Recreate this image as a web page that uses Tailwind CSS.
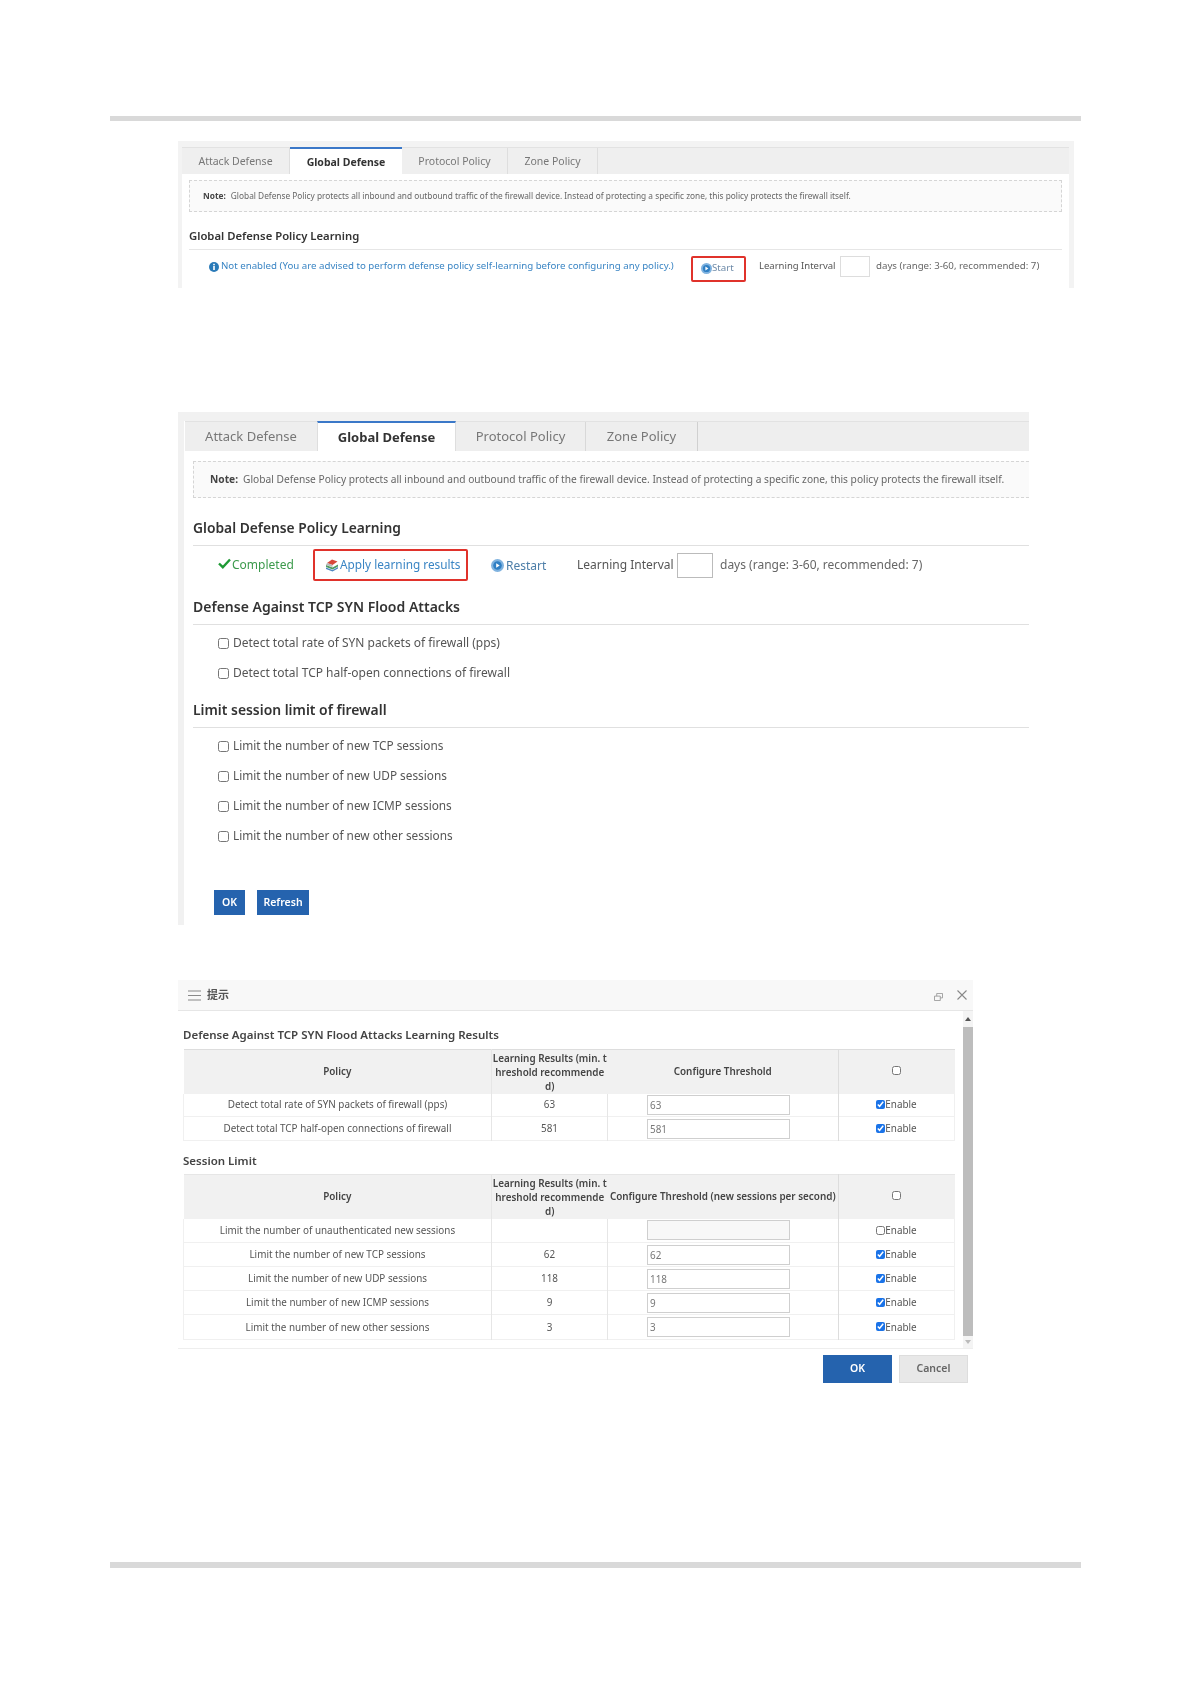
<!DOCTYPE html>
<html>
<head>
<meta charset="UTF-8">
<script src="https://cdn.jsdelivr.net/npm/@tailwindcss/browser@4"></script>
</head>
<body class="bg-white text-[#444] font-['Noto_Sans','Noto_Sans_CJK_SC',sans-serif]">
<div class="w-[1191px] h-[1684px] overflow-hidden pt-[116px] blur-[0.3px]">
  <div class="mx-[110px] h-[5px] bg-[#d9d9d9]"></div>

  <!-- first capture: learning not started -->
  <section class="mt-[20px] ml-[178px] w-[896px] h-[147px] bg-[#f3f3f3] pt-[6px] pl-[4px] pr-[5px]">
    <div class="bg-white h-full">
      <div class="flex h-[27px] bg-[#efefef] text-[10.5px] text-[#777] border-t border-[#e2e2e2]">
        <div class="w-[108px] flex items-center justify-center border-r border-[#dedede] pt-[1px]">Attack Defense</div>
        <div class="w-[112px] flex items-center justify-center bg-white border-t-[2px] border-[#3b78c8] -mt-px font-bold text-[#333] pt-[3px]">Global Defense</div>
        <div class="w-[106px] flex items-center justify-center border-r border-[#dedede] pt-[1px]">Protocol Policy</div>
        <div class="w-[90px] flex items-center justify-center border-r border-[#dedede] pt-[1px]">Zone Policy</div>
      </div>
      <div class="mx-[7px] mt-[6px] h-[32px] flex items-center pl-[13px] pt-[1px] bg-[#fafafa] border border-dashed border-[#d5d5d5] text-[8.3px] text-[#666] whitespace-nowrap">
        <b class="text-[#444] mr-[5px]">Note:</b>Global Defense Policy protects all inbound and outbound traffic of the firewall device. Instead of protecting a specific zone, this policy protects the firewall itself.
      </div>
      <h3 class="mx-[7px] mt-[13px] h-[24px] text-[11.3px] font-semibold text-[#333] leading-[22px] border-none">Global Defense Policy Learning</h3>
      <div class="mx-[7px] border-t border-[#e6e6e6]"></div>
      <div class="flex items-center h-[21px] mt-[6px] text-[9.7px] whitespace-nowrap">
        <svg class="ml-[27px] w-[10px] h-[10px]" viewBox="0 0 10 10"><circle cx="5" cy="5" r="5" fill="#2a7ab8"/><rect x="4.2" y="4" width="1.6" height="4" fill="#fff"/><rect x="4.2" y="1.8" width="1.6" height="1.5" fill="#fff"/></svg>
        <span class="ml-[2px] w-[465px] text-[#3a85c4]">Not enabled (You are advised to perform defense policy self-learning before configuring any policy.)</span>
        <div class="ml-[5px] w-[55px] h-[26px] self-start flex items-center pl-[8px] pb-[1px] border-[2px] border-[#e0322b] rounded-[2px] text-[#6d8aa8]">
          <svg class="w-[11px] h-[11px]" viewBox="0 0 14 14"><circle cx="7" cy="7" r="7" fill="#7fb2df"/><circle cx="7" cy="7" r="4.6" fill="#2f7fc4"/><path d="M5.6 4.6 9.4 7 5.6 9.4Z" fill="#fff"/></svg>
          <span>Start</span>
        </div>
        <span class="ml-[13px] w-[76px] text-[9.5px] text-[#555]">Learning Interval</span>
        <div class="ml-[5px] w-[30px] h-[21px] border border-[#ddd]"></div>
        <span class="ml-[6px] text-[#666]">days (range: 3-60, recommended: 7)</span>
      </div>
    </div>
  </section>

  <!-- second capture: learning completed -->
  <section class="mt-[124px] ml-[178px] w-[851px] h-[513px] bg-[#f1f1f1] pt-[9px] pl-[6px]">
    <div class="bg-white h-full pl-px">
      <div class="flex h-[30px] bg-[#eeeeee] text-[13px] text-[#777] border-t border-[#e2e2e2]">
        <div class="w-[132px] flex items-center justify-center">Attack Defense</div>
        <div class="w-[139px] flex items-center justify-center bg-white border-t-[2px] border-x border-x-[#dedede] border-t-[#3b78c8] -mt-px font-bold text-[#333] pt-[1px]">Global Defense</div>
        <div class="w-[130px] flex items-center justify-center border-r border-[#d8d8d8]">Protocol Policy</div>
        <div class="w-[112px] flex items-center justify-center border-r border-[#d0d0d0]">Zone Policy</div>
      </div>
      <div class="ml-[8px] mt-[10px] h-[37px] flex items-center pl-[16px] bg-[#fafafa] border border-r-0 border-dashed border-[#d5d5d5] text-[10.2px] text-[#666] whitespace-nowrap">
        <b class="text-[#444] mr-[5px]">Note:</b>Global Defense Policy protects all inbound and outbound traffic of the firewall device. Instead of protecting a specific zone, this policy protects the firewall itself.
      </div>
      <h3 class="ml-[8px] mt-[19px] h-[28px] text-[13.8px] font-semibold text-[#333] leading-[22px]">Global Defense Policy Learning</h3>
      <div class="ml-[8px] border-t border-[#e0e0e0]"></div>
      <div class="flex items-center h-[32px] mt-[3px] text-[12px] whitespace-nowrap">
        <svg class="ml-[33px] w-[13px] h-[11px] -mt-[3px]" viewBox="0 0 13 11"><path d="M1 5.5 4.8 9.2 12 1.5" fill="none" stroke="#1f9a35" stroke-width="2.4"/></svg>
        <span class="ml-[1px] w-[62px] text-[#3c9a4c]">Completed</span>
        <div class="ml-[19px] w-[155px] h-[32px] flex items-center pl-[10px] border-[2px] border-[#e0322b] rounded-[2px] text-[11.8px] text-[#3a85c4]">
          <svg class="w-[14px] h-[14px] shrink-0" viewBox="0 0 14 14"><path d="M2 5 7 1.5 12.5 3.5 7.5 7Z" fill="#d8483a"/><path d="M1 7 7.5 9.5 13 6.5V8.5L7.5 11.5 1 9Z" fill="#4f9c62"/><path d="M1 9.5 7.5 12 13 9V10.5L7.5 13.5 1 11Z" fill="#4f86c0"/><path d="M2 5 7.5 7V9L1 7Z" fill="#b8b8b8"/></svg>
          <span class="ml-[1px]">Apply learning results</span>
        </div>
        <svg class="ml-[23px] w-[13px] h-[13px] shrink-0" viewBox="0 0 14 14"><circle cx="7" cy="7" r="7" fill="#7fb2df"/><circle cx="7" cy="7" r="4.6" fill="#2f7fc4"/><path d="M5.6 4.6 9.4 7 5.6 9.4Z" fill="#fff"/></svg>
        <span class="ml-[2px] w-[40px] text-[#4d7ea8] mt-[2px]">Restart</span>
        <span class="ml-[31px] w-[95px] text-[#555]">Learning Interval</span>
        <div class="ml-[5px] w-[36px] h-[25px] border border-[#bbb]"></div>
        <span class="ml-[7px] text-[#666]">days (range: 3-60, recommended: 7)</span>
      </div>
      <h3 class="ml-[8px] mt-[15px] h-[28px] text-[14px] font-semibold text-[#333] leading-[22px]">Defense Against TCP SYN Flood Attacks</h3>
      <div class="ml-[8px] border-t border-[#e0e0e0]"></div>
      <div class="pl-[33px] pt-[3px] text-[12px] text-[#555]">
        <label class="flex items-center h-[30px] gap-[4px]"><input type="checkbox" class="m-0 w-[11px] h-[11px]">Detect total rate of SYN packets of firewall (pps)</label>
        <label class="flex items-center h-[30px] gap-[4px]"><input type="checkbox" class="m-0 w-[11px] h-[11px]">Detect total TCP half-open connections of firewall</label>
      </div>
      <h3 class="ml-[8px] mt-[11px] h-[28px] text-[13.9px] font-semibold text-[#333] leading-[22px]">Limit session limit of firewall</h3>
      <div class="ml-[8px] border-t border-[#e0e0e0]"></div>
      <div class="pl-[33px] pt-[3px] text-[11.8px] text-[#555]">
        <label class="flex items-center h-[30px] gap-[4px]"><input type="checkbox" class="m-0 w-[11px] h-[11px]">Limit the number of new TCP sessions</label>
        <label class="flex items-center h-[30px] gap-[4px]"><input type="checkbox" class="m-0 w-[11px] h-[11px]">Limit the number of new UDP sessions</label>
        <label class="flex items-center h-[30px] gap-[4px]"><input type="checkbox" class="m-0 w-[11px] h-[11px]">Limit the number of new ICMP sessions</label>
        <label class="flex items-center h-[30px] gap-[4px]"><input type="checkbox" class="m-0 w-[11px] h-[11px]">Limit the number of new other sessions</label>
      </div>
      <div class="flex gap-[12px] ml-[29px] mt-[39px] text-[10.5px] font-semibold text-white">
        <div class="w-[31px] h-[25px] bg-[#2563ae] flex items-center justify-center">OK</div>
        <div class="w-[52px] h-[25px] bg-[#2563ae] flex items-center justify-center">Refresh</div>
      </div>
    </div>
  </section>

  <!-- third capture: results dialog -->
  <section class="mt-[55px] ml-[178px] w-[795px]">
    <div class="flex items-center h-[31px] bg-[#f8f8f8] border-b border-[#e6e6e6] pl-[10px] pr-[6px]">
      <svg class="w-[13px] h-[11px]" viewBox="0 0 13 11"><path d="M0 1h13M0 5.5h13M0 10h13" stroke="#888" stroke-width="1.2"/></svg>
      <span class="ml-[6px] text-[11px] font-semibold text-[#555]">提示</span>
      <svg class="ml-auto w-[9px] h-[8px] mt-[3px]" viewBox="0 0 10 9"><path d="M.5 3.5h6.5v5H.5zM3 3.5V.5h6.5v5H7" fill="none" stroke="#999"/></svg>
      <svg class="ml-[14px] w-[10px] h-[10px]" viewBox="0 0 10 10"><path d="M.5.5l9 9M9.5.5l-9 9" stroke="#888" stroke-width="1.1"/></svg>
    </div>
    <div class="flex h-[338px] border-b border-[#eeeeee]">
      <div class="w-[785px] pl-[5px]">
        <h4 class="mt-[15px] h-[23px] text-[11.5px] font-semibold text-[#444] leading-[18px]">Defense Against TCP SYN Flood Attacks Learning Results</h4>
        <table class="table-fixed w-[771px] border-collapse text-[9.9px] text-[#555] text-center">
          <colgroup><col class="w-[308px]"><col class="w-[116px]"><col class="w-[231px]"><col class="w-[116px]"></colgroup>
          <thead class="bg-[#f1f1f1] text-[#444] font-semibold border-t border-[#dddddd]">
            <tr class="h-[44px]">
              <th class="font-semibold">Policy</th>
              <th class="font-semibold leading-[14px] border-l border-[#e6e6e6] whitespace-nowrap">Learning Results (min. t<br>hreshold recommende<br>d)</th>
              <th class="font-semibold">Configure Threshold</th>
              <th class="border-l border-[#dddddd]"><input type="checkbox" class="w-[9px] h-[9px] m-0"></th>
            </tr>
          </thead>
          <tbody>
            <tr class="h-[23px] border-b border-l border-r border-[#f0f0f0]">
              <td>Detect total rate of SYN packets of firewall (pps)</td>
              <td class="border-l border-r border-[#e6e6e6]">63</td>
              <td class="text-left pl-[39px]"><div class="w-[143px] h-[20px] border border-[#cfcfcf] pl-[2px] leading-[18px] text-[#777]">63</div></td>
              <td class="border-l border-[#dddddd]"><label class="flex items-center justify-center"><input type="checkbox" checked class="w-[9px] h-[9px] m-0 accent-[#1a73e8]">Enable</label></td>
            </tr>
            <tr class="h-[24px] border-b border-l border-r border-[#f0f0f0]">
              <td>Detect total TCP half-open connections of firewall</td>
              <td class="border-l border-r border-[#e6e6e6]">581</td>
              <td class="text-left pl-[39px]"><div class="w-[143px] h-[20px] border border-[#cfcfcf] pl-[2px] leading-[18px] text-[#777]">581</div></td>
              <td class="border-l border-[#dddddd]"><label class="flex items-center justify-center"><input type="checkbox" checked class="w-[9px] h-[9px] m-0 accent-[#1a73e8]">Enable</label></td>
            </tr>
          </tbody>
        </table>
        <h4 class="mt-[11px] h-[22px] text-[11.5px] font-semibold text-[#444] leading-[18px]">Session Limit</h4>
        <table class="table-fixed w-[771px] border-collapse text-[9.9px] text-[#555] text-center">
          <colgroup><col class="w-[308px]"><col class="w-[116px]"><col class="w-[231px]"><col class="w-[116px]"></colgroup>
          <thead class="bg-[#f1f1f1] text-[#444] font-semibold border-t border-[#e6e6e6]">
            <tr class="h-[44px]">
              <th class="font-semibold">Policy</th>
              <th class="font-semibold leading-[14px] border-l border-[#e6e6e6] whitespace-nowrap">Learning Results (min. t<br>hreshold recommende<br>d)</th>
              <th class="font-semibold whitespace-nowrap">Configure Threshold (new sessions per second)</th>
              <th class="border-l border-[#dddddd]"><input type="checkbox" class="w-[9px] h-[9px] m-0"></th>
            </tr>
          </thead>
          <tbody>
            <tr class="h-[24px] border-b border-l border-r border-[#f0f0f0]">
              <td>Limit the number of unauthenticated new sessions</td>
              <td class="border-l border-r border-[#e6e6e6]"></td>
              <td class="text-left pl-[39px]"><div class="w-[143px] h-[20px] border border-[#cfcfcf] bg-[#f8f8f8]"></div></td>
              <td class="border-l border-[#dddddd]"><label class="flex items-center justify-center"><input type="checkbox" class="w-[9px] h-[9px] m-0">Enable</label></td>
            </tr>
            <tr class="h-[24px] border-b border-l border-r border-[#f0f0f0]">
              <td>Limit the number of new TCP sessions</td>
              <td class="border-l border-r border-[#e6e6e6]">62</td>
              <td class="text-left pl-[39px]"><div class="w-[143px] h-[20px] border border-[#cfcfcf] pl-[2px] leading-[18px] text-[#777]">62</div></td>
              <td class="border-l border-[#dddddd]"><label class="flex items-center justify-center"><input type="checkbox" checked class="w-[9px] h-[9px] m-0 accent-[#1a73e8]">Enable</label></td>
            </tr>
            <tr class="h-[24px] border-b border-l border-r border-[#f0f0f0]">
              <td>Limit the number of new UDP sessions</td>
              <td class="border-l border-r border-[#e6e6e6]">118</td>
              <td class="text-left pl-[39px]"><div class="w-[143px] h-[20px] border border-[#cfcfcf] pl-[2px] leading-[18px] text-[#777]">118</div></td>
              <td class="border-l border-[#dddddd]"><label class="flex items-center justify-center"><input type="checkbox" checked class="w-[9px] h-[9px] m-0 accent-[#1a73e8]">Enable</label></td>
            </tr>
            <tr class="h-[24px] border-b border-l border-r border-[#f0f0f0]">
              <td>Limit the number of new ICMP sessions</td>
              <td class="border-l border-r border-[#e6e6e6]">9</td>
              <td class="text-left pl-[39px]"><div class="w-[143px] h-[20px] border border-[#cfcfcf] pl-[2px] leading-[18px] text-[#777]">9</div></td>
              <td class="border-l border-[#dddddd]"><label class="flex items-center justify-center"><input type="checkbox" checked class="w-[9px] h-[9px] m-0 accent-[#1a73e8]">Enable</label></td>
            </tr>
            <tr class="h-[25px] border-b border-l border-r border-[#f0f0f0]">
              <td>Limit the number of new other sessions</td>
              <td class="border-l border-r border-[#e6e6e6]">3</td>
              <td class="text-left pl-[39px]"><div class="w-[143px] h-[20px] border border-[#cfcfcf] pl-[2px] leading-[18px] text-[#777]">3</div></td>
              <td class="border-l border-[#dddddd]"><label class="flex items-center justify-center"><input type="checkbox" checked class="w-[9px] h-[9px] m-0 accent-[#1a73e8]">Enable</label></td>
            </tr>
          </tbody>
        </table>
      </div>
      <div class="w-[10px] flex flex-col items-center bg-[#f4f4f4]">
        <div class="h-[16px] flex items-center"><div class="border-x-[3px] border-x-transparent border-b-[4px] border-b-[#555]"></div></div>
        <div class="w-full h-[310px] bg-[#bdbdbd]"></div>
        <div class="h-[12px] flex items-center"><div class="border-x-[3px] border-x-transparent border-t-[4px] border-t-[#bbb]"></div></div>
      </div>
    </div>
    <div class="flex justify-end gap-[7px] mt-[6px] pr-[5px] text-[10.5px] font-semibold">
      <div class="w-[69px] h-[28px] bg-[#2563ae] text-white flex items-center justify-center">OK</div>
      <div class="w-[69px] h-[28px] bg-[#e8e8e8] border border-[#dddddd] text-[#666] flex items-center justify-center">Cancel</div>
    </div>
  </section>

  <div class="mx-[110px] mt-[179px] h-[6px] bg-[#d9d9d9]"></div>
</div>
</body>
</html>
